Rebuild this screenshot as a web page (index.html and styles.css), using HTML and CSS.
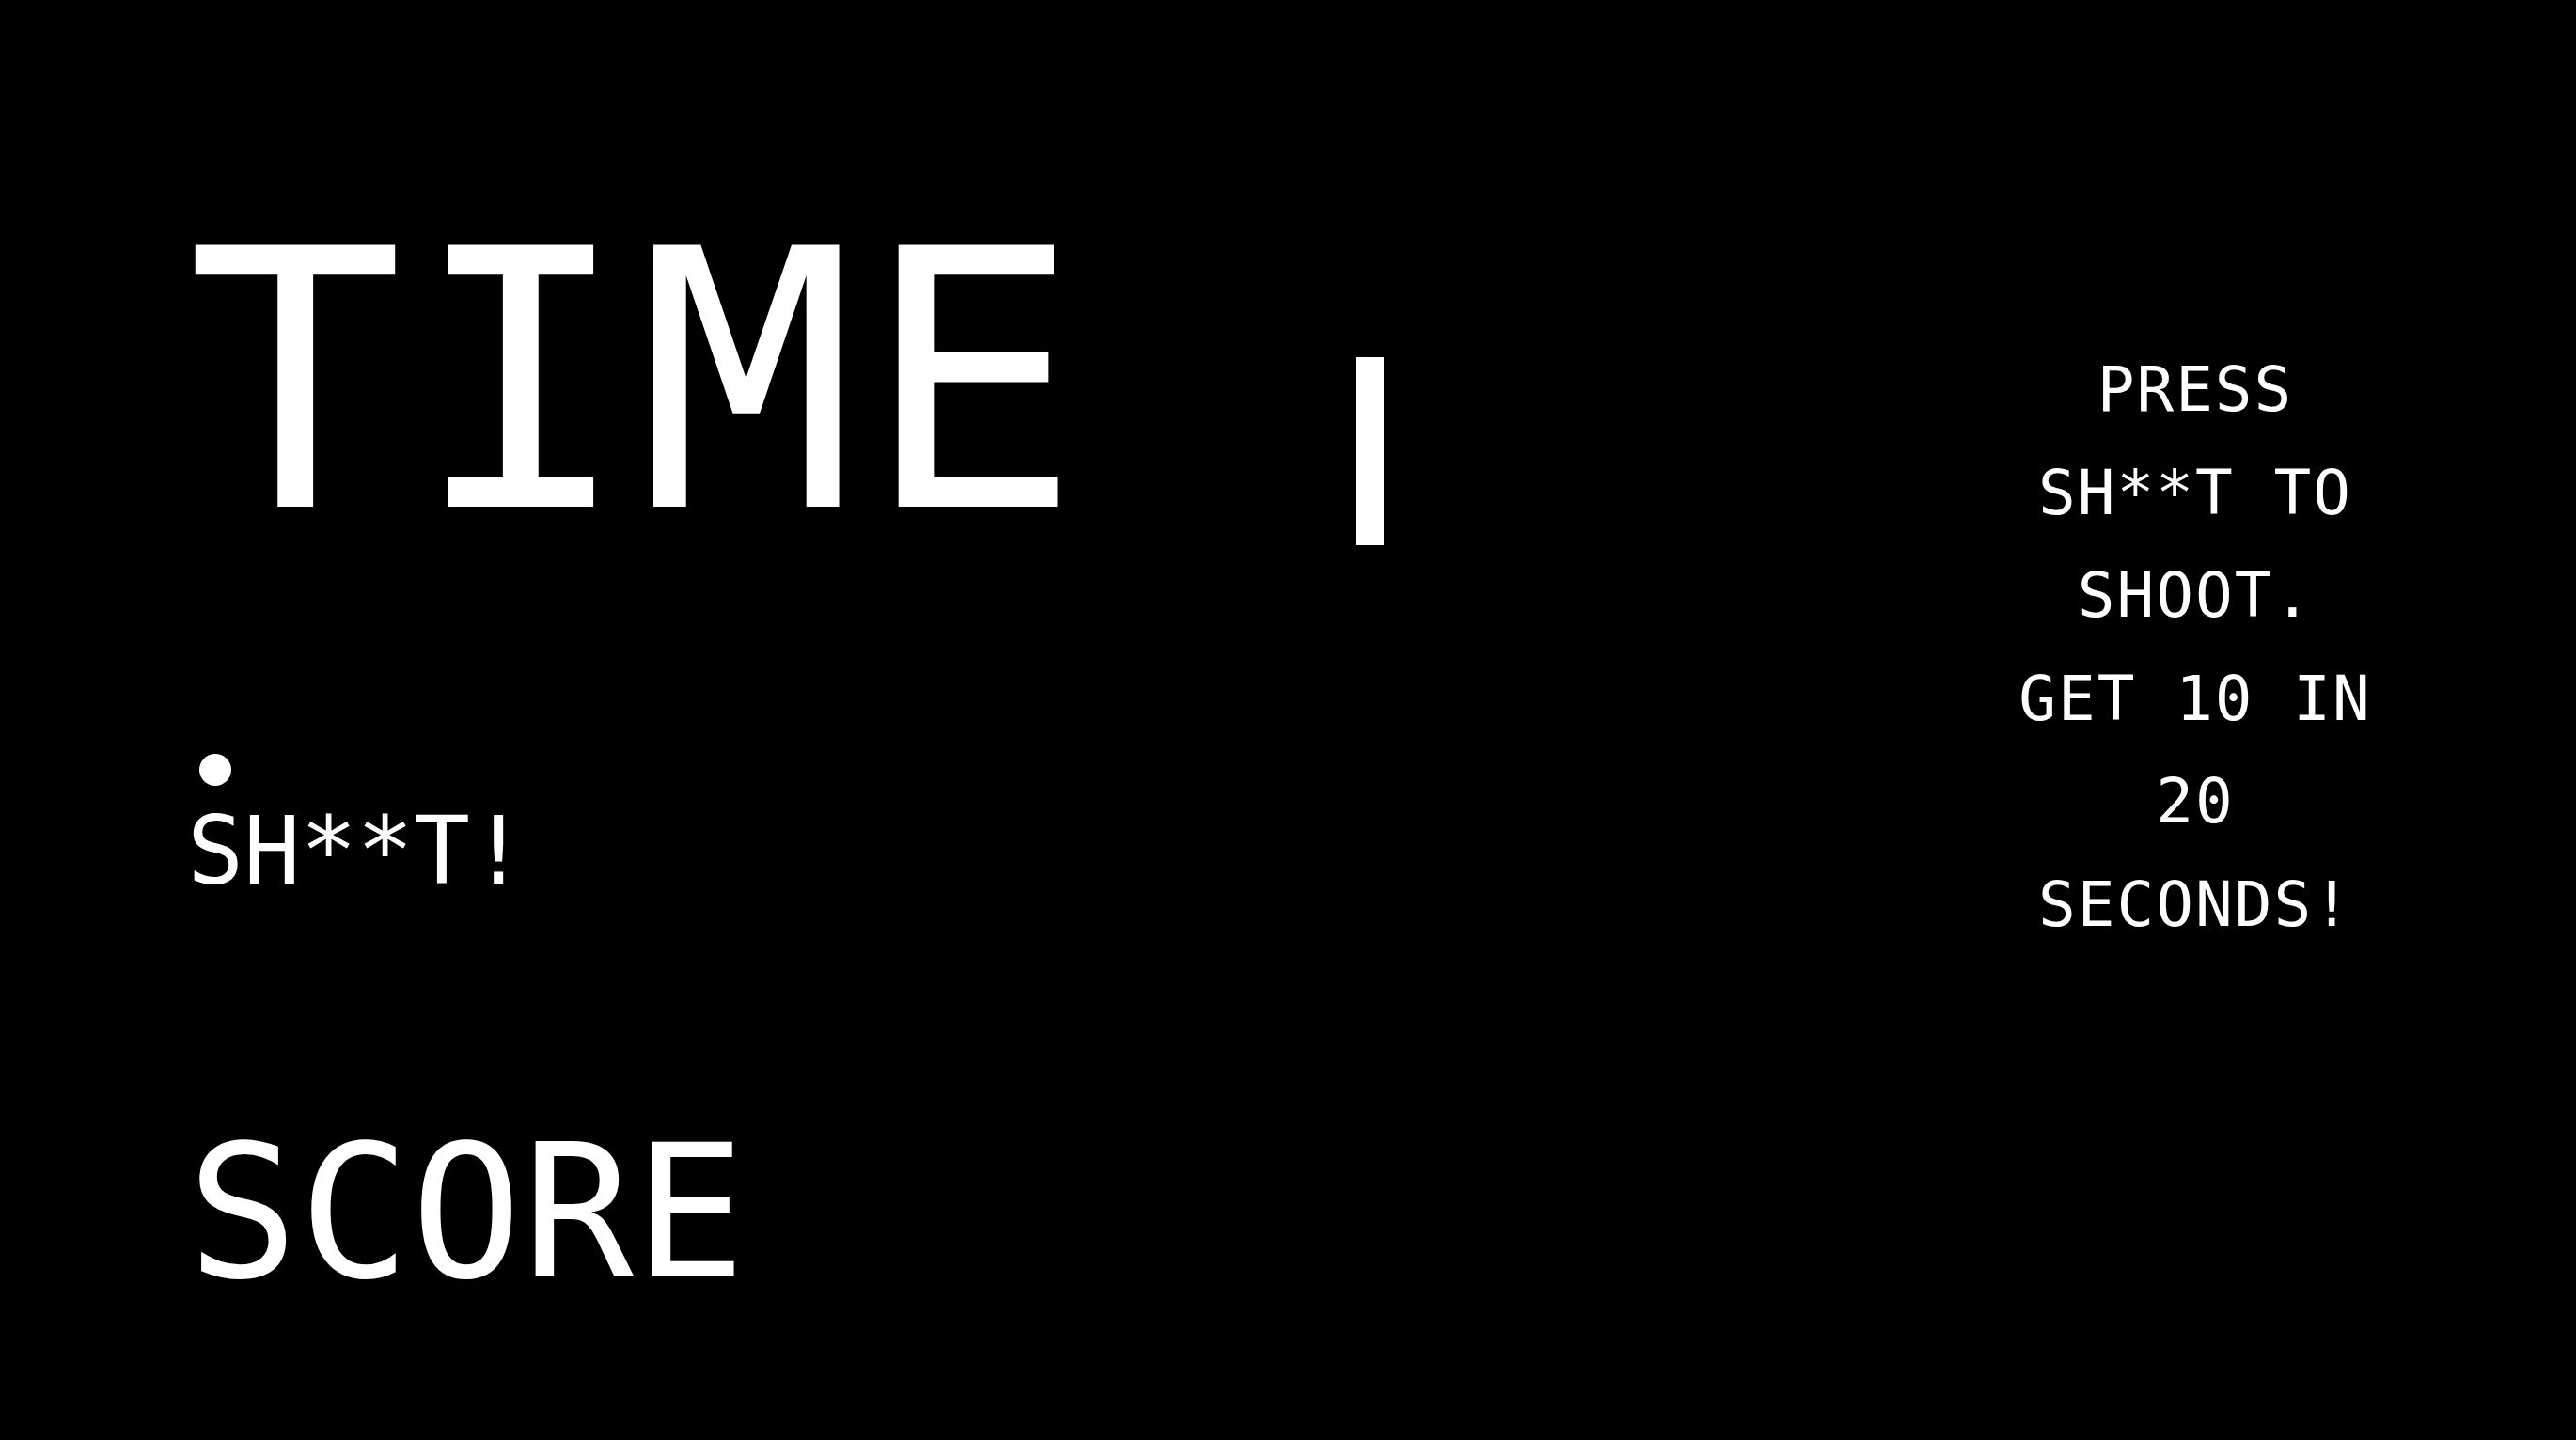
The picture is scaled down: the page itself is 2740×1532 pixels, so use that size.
FILE: index.html
```html
<!DOCTYPE html>
<html lang="en">
<head>
<meta charset="utf-8">
<title>SH**T</title>
<link rel="stylesheet" href="styles.css">
</head>
<body>
<main class="screen">
  <section class="left">
    <div class="time">TIME</div>
    <div class="dot"></div>
    <div class="shout">SH**T!</div>
    <div class="score">SCORE</div>
  </section>
  <div class="bar"></div>
  <section class="info">PRESS SH**T TO SHOOT. GET 10 IN 20 SECONDS!</section>
</main>
</body>
</html>
```
FILE: styles.css
```css
html, body {
  margin: 0;
  padding: 0;
  background: #000;
}
body {
  width: 2740px;
  height: 1532px;
  overflow: hidden;
  color: #fff;
  font-family: "DejaVu Sans Mono", "Liberation Mono", monospace;
}
.screen {
  display: flex;
  align-items: flex-start;
  height: 1532px;
  box-sizing: border-box;
  padding: 0 205px 0 199px;
}
.left {
  width: 1243px;
  flex: none;
  display: flex;
  flex-direction: column;
  align-items: flex-start;
  padding-top: 216px;
}
.time {
  font-size: 382px;
  line-height: 382px;
  letter-spacing: 10px;
}
.dot {
  width: 34px;
  height: 34px;
  border-radius: 50%;
  background: #fff;
  margin: 204px 0 0 13px;
}
.shout {
  font-size: 100px;
  line-height: 100px;
  margin-top: 20px;
}
.score {
  font-size: 196px;
  line-height: 196px;
  margin-top: 236px;
  letter-spacing: 1px;
}
.bar {
  width: 30px;
  height: 200px;
  margin-top: 380px;
  background: #fff;
  flex: none;
}
.info {
  margin-left: auto;
  width: 400px;
  margin-top: 360px;
  font-size: 66px;
  letter-spacing: 2px;
  line-height: 109.6px;
  text-align: center;
}
```
